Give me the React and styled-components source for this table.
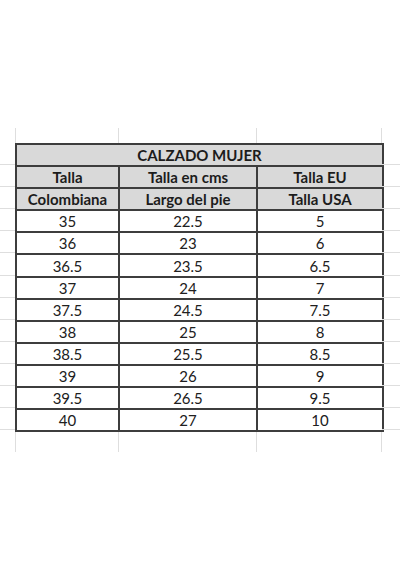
import React from "react";
import styled, { createGlobalStyle } from "styled-components";

const Global = createGlobalStyle`
  html, body { margin: 0; padding: 0; background: #ffffff; }
  * { box-sizing: border-box; }
`;

const GRID = "#dedede";
const INK = "#3d3d3d";
const ROW_H = 22.1;

const Page = styled.div`
  width: 400px;
  height: 580px;
  padding-top: 128px;
  background: #fff;
  font-family: Lato, "Open Sans", "Liberation Sans", sans-serif;
`;

const Sheet = styled.div`
  display: flex;
  flex-direction: row;
  width: 400px;
`;

const Margin = styled.div`
  display: flex;
  flex-direction: column;
  width: ${(p) => p.$w}px;
`;

const Stub = styled.div`
  height: ${(p) => p.$h}px;
`;

const MarginCell = styled.div`
  height: ${ROW_H}px;
  border-bottom: 1px solid ${GRID};
`;

const Center = styled.div`
  display: flex;
  flex-direction: column;
  width: 367px;
`;

const StubRow = styled.div`
  display: flex;
  height: ${(p) => p.$h}px;
`;

const StubCell = styled.div`
  width: ${(p) => p.$w}px;
  border-left: 1px solid ${GRID};
  border-right: ${(p) => (p.$last ? `1px solid ${GRID}` : "none")};
`;

const Table = styled.table`
  width: 367px;
  border-collapse: collapse;
  table-layout: fixed;
  border: 2px solid ${INK};
`;

const Row = styled.tr`
  height: ${ROW_H}px;
  background: ${(p) => (p.$head ? "#d9d9d9" : "#ffffff")};
`;

const Cell = styled.td`
  border: 2px solid ${INK};
  padding: 0;
  height: ${ROW_H}px;
  text-align: center;
  vertical-align: middle;
  font-size: 15px;
  line-height: 16px;
  font-weight: ${(p) => (p.$bold ? 700 : 400)};
  color: ${(p) => (p.$bold ? "#1c1c1c" : "#202020")};
`;

const cols = [103, 138, 126];

const header = [
  ["Talla", "Talla en cms", "Talla EU"],
  ["Colombiana", "Largo del pie", "Talla USA"],
];

const data = [
  ["35", "22.5", "5"],
  ["36", "23", "6"],
  ["36.5", "23.5", "6.5"],
  ["37", "24", "7"],
  ["37.5", "24.5", "7.5"],
  ["38", "25", "8"],
  ["38.5", "25.5", "8.5"],
  ["39", "26", "9"],
  ["39.5", "26.5", "9.5"],
  ["40", "27", "10"],
];

const SideMargin = ({ w }) => (
  <Margin $w={w}>
    <Stub $h={15} />
    {Array.from({ length: 13 }).map((_, i) => (
      <MarginCell key={i} />
    ))}
  </Margin>
);

const Stubs = ({ h }) => (
  <StubRow $h={h}>
    {cols.map((w, i) => (
      <StubCell key={i} $w={w} $last={i === cols.length - 1} />
    ))}
  </StubRow>
);

export default function App() {
  return (
    <Page>
      <Global />
      <Sheet>
        <SideMargin w={15} />
        <Center>
          <Stubs h={15} />
          <Table>
            <colgroup>
              {cols.map((w, i) => (
                <col key={i} style={{ width: w }} />
              ))}
            </colgroup>
            <tbody>
              <Row $head>
                <Cell $bold colSpan={3}>CALZADO MUJER</Cell>
              </Row>
              {header.map((r, i) => (
                <Row $head key={"h" + i}>
                  {r.map((t, j) => (
                    <Cell $bold key={j}>{t}</Cell>
                  ))}
                </Row>
              ))}
              {data.map((r, i) => (
                <Row key={"d" + i}>
                  {r.map((t, j) => (
                    <Cell key={j}>{t}</Cell>
                  ))}
                </Row>
              ))}
            </tbody>
          </Table>
          <Stubs h={20} />
        </Center>
        <SideMargin w={18} />
      </Sheet>
    </Page>
  );
}
